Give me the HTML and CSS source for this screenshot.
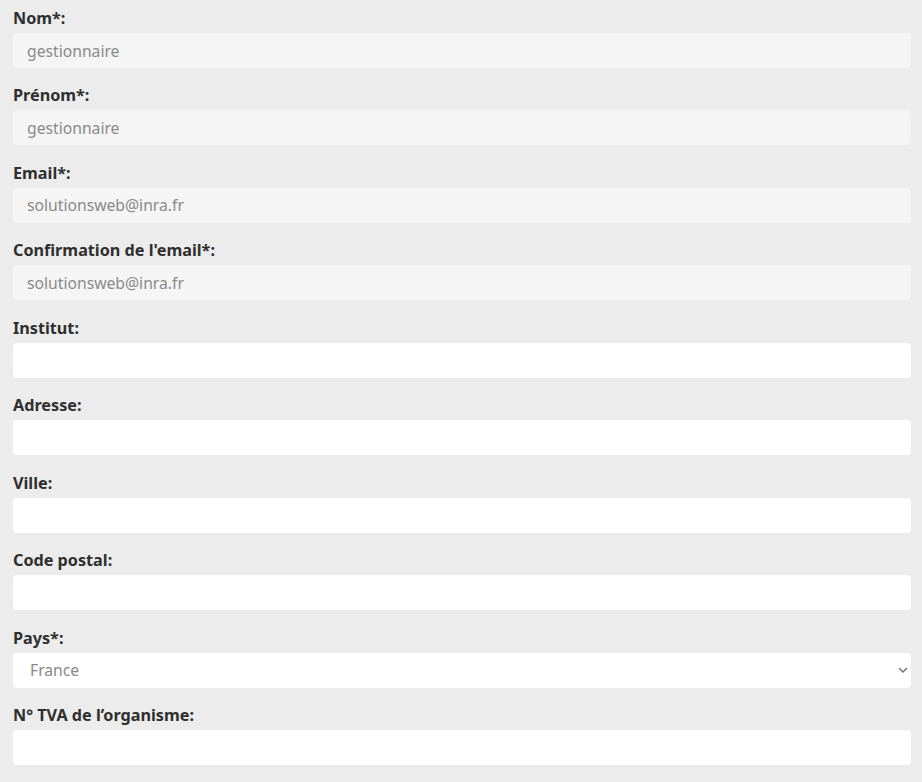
FILE: index.html
```html
<!DOCTYPE html>
<html lang="fr">
<head>
<meta charset="utf-8">
<title>Profil</title>
<link rel="stylesheet" href="styles.css">
</head>
<body>
<form class="form">
  <div class="group">
    <label class="label">Nom*:</label>
    <input class="field is-disabled" type="text" value="gestionnaire" disabled>
  </div>
  <div class="group">
    <label class="label">Prénom*:</label>
    <input class="field is-disabled" type="text" value="gestionnaire" disabled>
  </div>
  <div class="group">
    <label class="label">Email*:</label>
    <input class="field is-disabled" type="text" value="solutionsweb@inra.fr" disabled>
  </div>
  <div class="group">
    <label class="label">Confirmation de l'email*:</label>
    <input class="field is-disabled" type="text" value="solutionsweb@inra.fr" disabled>
  </div>
  <div class="group">
    <label class="label">Institut:</label>
    <input class="field" type="text">
  </div>
  <div class="group">
    <label class="label">Adresse:</label>
    <input class="field" type="text">
  </div>
  <div class="group">
    <label class="label">Ville:</label>
    <input class="field" type="text">
  </div>
  <div class="group">
    <label class="label">Code postal:</label>
    <input class="field" type="text">
  </div>
  <div class="group">
    <label class="label">Pays*:</label>
    <div class="select-wrap">
      <select class="field select">
        <option>France</option>
      </select>
      <svg class="chevron" width="10" height="7" viewBox="0 0 10 7"><path d="M1.5 1.5 L5 5 L8.5 1.5" fill="none" stroke="#777" stroke-width="1.6" stroke-linecap="round" stroke-linejoin="round"/></svg>
    </div>
  </div>
  <div class="group">
    <label class="label">N° TVA de l’organisme:</label>
    <input class="field" type="text">
  </div>
</form>
</body>
</html>
```
FILE: styles.css
```css
html, body {
  margin: 0;
  padding: 0;
  background: #ececec;
}
body {
  font-family: "Noto Sans", "Open Sans", sans-serif;
  font-size: 16px;
  color: #333;
}
.form {
  padding: 8px 11px 0 13px;
  display: flex;
  flex-direction: column;
  gap: 17.44px;
}
.group {
  display: flex;
  flex-direction: column;
  gap: 5px;
}
.label {
  font-weight: 700;
  font-size: 16.2px;
  line-height: 20px;
  color: #2f2f2f;
}
.field {
  box-sizing: border-box;
  width: 100%;
  height: 35px;
  border: none;
  border-radius: 4px;
  background: #fff;
  padding: 0 14px;
  font-family: "Noto Sans", "Open Sans", sans-serif;
  font-size: 15.7px;
  color: #888;
  outline: none;
}
.field.is-disabled {
  background: #f5f5f5;
  color: #8a8a8a;
  -webkit-text-fill-color: #8a8a8a;
  opacity: 1;
}
.select-wrap {
  position: relative;
}
.select {
  appearance: none;
  -webkit-appearance: none;
  padding-left: 17px;
  display: block;
}
.chevron {
  position: absolute;
  right: 3px;
  top: 14px;
}
```
